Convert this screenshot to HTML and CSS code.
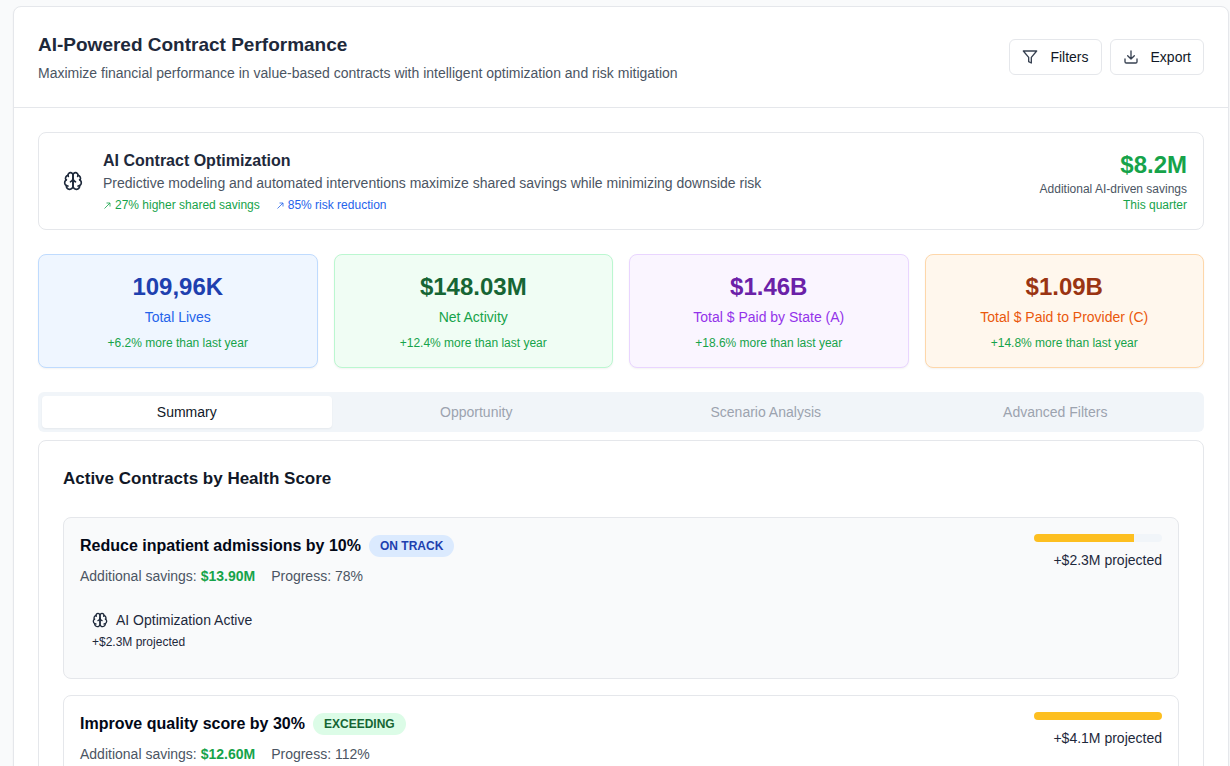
FILE: index.html
```html
<!DOCTYPE html>
<html lang="en">
<head>
<meta charset="utf-8">
<title>AI-Powered Contract Performance</title>
<link rel="stylesheet" href="styles.css">
</head>
<body>
<svg class="sprite" aria-hidden="true">
  <symbol id="brain" viewBox="0 0 24 24">
    <path d="M12 5a3 3 0 1 0-5.997.125 4 4 0 0 0-2.526 5.770 4 4 0 0 0 .556 6.588A4 4 0 1 0 12 18Z"/>
    <path d="M12 5a3 3 0 1 1 5.997.125 4 4 0 0 1 2.526 5.770 4 4 0 0 1-.556 6.588A4 4 0 1 1 12 18Z"/>
    <path d="M15 13a4.500 4.500 0 0 1-3-4 4.500 4.500 0 0 1-3 4"/>
    <path d="M17.599 6.500a3 3 0 0 0 .399-1.375"/>
    <path d="M6.003 5.125A3 3 0 0 0 6.401 6.500"/>
    <path d="M3.477 10.896a4 4 0 0 1 .585-.396"/>
    <path d="M19.938 10.500a4 4 0 0 1 .585.396"/>
    <path d="M6 18a4 4 0 0 1-1.967-.516"/>
    <path d="M19.967 17.484A4 4 0 0 1 18 18"/>
  </symbol>
  <symbol id="arrow" viewBox="0 0 9 9">
    <path d="M1.500 7.500 7 2M3.500 2H7v3.500"/>
  </symbol>
</svg>
<main class="panel">
  <header class="panel-header">
    <div class="intro">
      <h1>AI-Powered Contract Performance</h1>
      <p class="body-text">Maximize financial performance in value-based contracts with intelligent optimization and risk mitigation</p>
    </div>
    <div class="actions">
      <button class="btn" type="button">
        <svg class="icon" viewBox="0 0 24 24" aria-hidden="true"><path d="M22 3H2l8 9.460V19l4 2v-8.540Z"/></svg>
        Filters
      </button>
      <button class="btn" type="button">
        <svg class="icon" viewBox="0 0 24 24" aria-hidden="true"><path d="M21 15v4a2 2 0 0 1-2 2H5a2 2 0 0 1-2-2v-4M7 10l5 5 5-5M12 15V3"/></svg>
        Export
      </button>
    </div>
  </header>

  <div class="content">
    <section class="banner">
      <div class="banner-icon"><svg class="icon icon-lg" aria-hidden="true"><use href="#brain"/></svg></div>
      <div class="banner-copy">
        <h2>AI Contract Optimization</h2>
        <p class="body-text">Predictive modeling and automated interventions maximize shared savings while minimizing downside risk</p>
        <div class="trends">
          <span class="trend green"><svg class="arrow" aria-hidden="true"><use href="#arrow"/></svg>27% higher shared savings</span>
          <span class="trend blue"><svg class="arrow" aria-hidden="true"><use href="#arrow"/></svg>85% risk reduction</span>
        </div>
      </div>
      <div class="banner-value">
        <div class="figure green">$8.2M</div>
        <div class="small">Additional AI-driven savings</div>
        <div class="small green">This quarter</div>
      </div>
    </section>

    <section class="stats">
      <div class="stat stat-blue">
        <div class="figure">109,96K</div>
        <div class="stat-label">Total Lives</div>
        <div class="small green">+6.2% more than last year</div>
      </div>
      <div class="stat stat-green">
        <div class="figure">$148.03M</div>
        <div class="stat-label">Net Activity</div>
        <div class="small green">+12.4% more than last year</div>
      </div>
      <div class="stat stat-purple">
        <div class="figure">$1.46B</div>
        <div class="stat-label">Total $ Paid by State (A)</div>
        <div class="small green">+18.6% more than last year</div>
      </div>
      <div class="stat stat-orange">
        <div class="figure">$1.09B</div>
        <div class="stat-label">Total $ Paid to Provider (C)</div>
        <div class="small green">+14.8% more than last year</div>
      </div>
    </section>

    <div class="tab-area">
      <div class="tabs" role="tablist">
        <button class="tab tab-active" type="button" role="tab" aria-selected="true">Summary</button>
        <button class="tab" type="button" role="tab" aria-selected="false">Opportunity</button>
        <button class="tab" type="button" role="tab" aria-selected="false">Scenario Analysis</button>
        <button class="tab" type="button" role="tab" aria-selected="false">Advanced Filters</button>
      </div>

      <section class="contracts">
        <h2 class="contracts-title">Active Contracts by Health Score</h2>
        <article class="contract contract-selected">
          <div class="contract-info">
            <div class="contract-heading">
              <h3>Reduce inpatient admissions by 10%</h3>
              <span class="badge badge-blue">ON TRACK</span>
            </div>
            <div class="facts">
              <span>Additional savings: <strong class="green">$13.90M</strong></span>
              <span>Progress: 78%</span>
            </div>
            <div class="optimization">
              <div class="optimization-title"><svg class="icon" aria-hidden="true"><use href="#brain"/></svg>AI Optimization Active</div>
              <div class="small">+$2.3M projected</div>
            </div>
          </div>
          <div class="projection">
            <div class="bar" role="progressbar" aria-label="Progress" aria-valuenow="78"><div class="bar-fill" style="width: 78%"></div></div>
            <div>+$2.3M projected</div>
          </div>
        </article>
        <article class="contract">
          <div class="contract-info">
            <div class="contract-heading">
              <h3>Improve quality score by 30%</h3>
              <span class="badge badge-green">EXCEEDING</span>
            </div>
            <div class="facts">
              <span>Additional savings: <strong class="green">$12.60M</strong></span>
              <span>Progress: 112%</span>
            </div>
          </div>
          <div class="projection">
            <div class="bar" role="progressbar" aria-label="Progress" aria-valuenow="100"><div class="bar-fill" style="width: 100%"></div></div>
            <div>+$4.1M projected</div>
          </div>
        </article>
      </section>
    </div>
  </div>
</main>
</body>
</html>
```
FILE: styles.css
```css
* { box-sizing: border-box; margin: 0; }

html { scrollbar-width: none; }

body {
  padding: 6px 1px 24px 13px;
  background: #f9fafb;
  color: #1e293b;
  font: 14px/20px "Liberation Sans", Arial, sans-serif;
}

.sprite { display: none; }

.icon {
  width: 16px;
  height: 16px;
  flex: none;
  fill: none;
  stroke: currentColor;
  stroke-width: 2;
  stroke-linecap: round;
  stroke-linejoin: round;
}

.icon-lg { width: 20px; height: 20px; }

.green { color: #16a34a; }
.blue { color: #2563eb; }
.body-text { color: #4b5563; }
.small { font-size: 12px; line-height: 16px; }
.figure { font-size: 24px; line-height: 32px; font-weight: 700; }

.panel {
  background: #fff;
  border: 1px solid #e5e7eb;
  border-radius: 8px;
  box-shadow: 0 1px 2px rgba(0, 0, 0, 0.05);
}

.panel-header {
  display: flex;
  align-items: center;
  justify-content: space-between;
  padding: 24px;
  border-bottom: 1px solid #e5e7eb;
}

.intro { display: grid; gap: 4px; }

h1 { font-size: 19px; line-height: 28px; }
h2, h3 { font-size: 16px; line-height: 24px; }

.actions { display: flex; gap: 8px; }

.btn {
  display: flex;
  align-items: center;
  gap: 12px;
  height: 36px;
  padding: 0 12px;
  background: #fff;
  border: 1px solid #e5e7eb;
  border-radius: 6px;
  color: #111827;
  font: inherit;
}

.btn .icon { color: #374151; }

.content { display: grid; gap: 24px; padding: 24px; }

.banner {
  display: flex;
  align-items: center;
  gap: 12px;
  padding: 16px;
  border: 1px solid #e5e7eb;
  border-radius: 8px;
}

.banner-icon { display: flex; padding: 8px; }
.banner-copy { flex: 1; }
.trends { display: flex; gap: 16px; margin-top: 4px; font-size: 12px; line-height: 16px; }
.trend { display: flex; align-items: center; gap: 3px; }
.arrow { width: 9px; height: 9px; fill: none; stroke: currentColor; stroke-width: 0.8; }
.banner-value { text-align: right; }
.banner-value .small:not(.green) { color: #4b5563; }

.stats { display: grid; grid-template-columns: repeat(4, 1fr); gap: 16px; }

.stat {
  padding: 16px;
  border: 1px solid;
  border-radius: 8px;
  box-shadow: 0 1px 2px rgba(0, 0, 0, 0.05);
  text-align: center;
}

.stat-label { margin: 4px 0 8px; }

.stat-blue { background: #eff6ff; border-color: #bfdbfe; }
.stat-blue .figure { color: #1e40af; }
.stat-blue .stat-label { color: #2563eb; }
.stat-green { background: #f0fdf4; border-color: #bbf7d0; }
.stat-green .figure { color: #166534; }
.stat-green .stat-label { color: #16a34a; }
.stat-purple { background: #faf5ff; border-color: #e9d5ff; }
.stat-purple .figure { color: #6b21a8; }
.stat-purple .stat-label { color: #9333ea; }
.stat-orange { background: #fff7ed; border-color: #fed7aa; }
.stat-orange .figure { color: #9a3412; }
.stat-orange .stat-label { color: #ea580c; }

.tab-area { display: grid; gap: 8px; }

.tabs {
  display: grid;
  grid-template-columns: repeat(4, 1fr);
  padding: 4px;
  background: #f1f5f9;
  border-radius: 6px;
}

.tab {
  height: 32px;
  padding: 0 12px;
  background: none;
  border: 0;
  border-radius: 4px;
  color: #9ca3af;
  font: inherit;
}

.tab-active {
  background: #fff;
  box-shadow: 0 1px 2px rgba(0, 0, 0, 0.05);
  color: #111827;
}

.contracts {
  display: grid;
  gap: 16px;
  padding: 24px;
  border: 1px solid #e5e7eb;
  border-radius: 8px;
}

.contracts-title {
  margin-bottom: 8px;
  color: #111827;
  font-size: 17px;
  line-height: 28px;
}

.contract {
  display: flex;
  justify-content: space-between;
  padding: 16px;
  border: 1px solid #e5e7eb;
  border-radius: 8px;
}

.contract-selected { background: #f9fafb; }
.contract-heading { display: flex; align-items: center; gap: 8px; color: #020817; }

.badge {
  padding: 3px 11px;
  border-radius: 11px;
  font-size: 12px;
  line-height: 16px;
  font-weight: 700;
}

.badge-blue { background: #dbeafe; color: #1e40af; }
.badge-green { background: #dcfce7; color: #166534; }

.facts { display: flex; gap: 16px; margin-top: 8px; color: #4b5563; }
.optimization { display: grid; gap: 4px; margin-top: 12px; padding: 12px; }
.optimization-title { display: flex; align-items: center; gap: 8px; }

.projection { display: grid; gap: 8px; align-content: start; width: 128px; text-align: right; }
.bar { height: 8px; overflow: hidden; border-radius: 4px; background: #f1f5f9; }
.bar-fill { height: 100%; background: #fdbf20; }
```
